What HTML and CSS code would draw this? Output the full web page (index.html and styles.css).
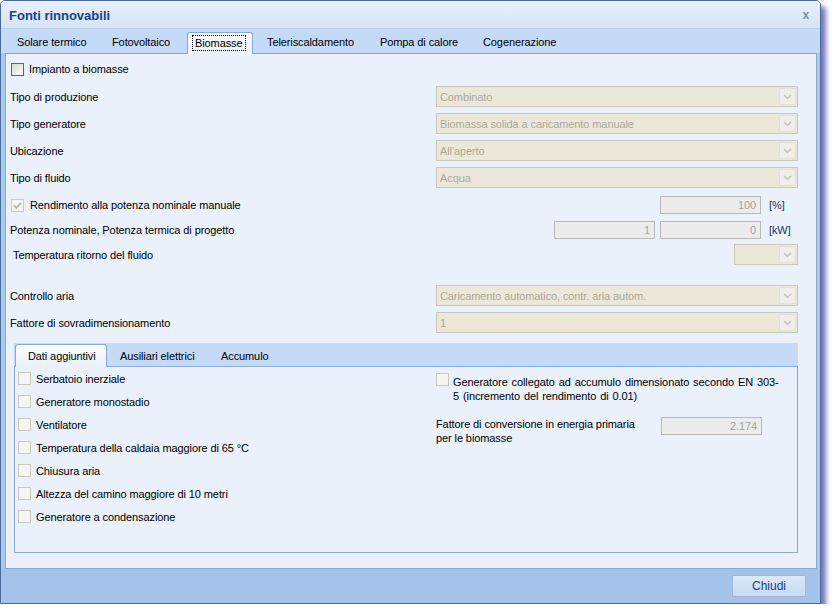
FILE: index.html
```html
<!DOCTYPE html>
<html>
<head>
<meta charset="utf-8">
<link rel="stylesheet" href="styles.css">
</head>
<body>
<div class="window">
  <div class="titlebar">
    <span class="title">Fonti rinnovabili</span>
    <span class="close">x</span>
  </div>
  <div class="tabstrip">
    <div class="tab t1">Solare termico</div>
    <div class="tab t2">Fotovoltaico</div>
    <div class="tab t3 active"><span class="focus">Biomasse</span></div>
    <div class="tab t4">Teleriscaldamento</div>
    <div class="tab t5">Pompa di calore</div>
    <div class="tab t6">Cogenerazione</div>
  </div>
  <div class="panel">
    <div class="row r-main">
      <span class="cb enabled"></span><span class="cbl">Impianto a biomasse</span>
    </div>
    <div class="row r-combo first">
      <span class="lbl">Tipo di produzione</span>
      <div class="combo"><span class="ctext">Combinato</span><span class="arrow"><svg width="9" height="6" viewBox="0 0 9 6"><path d="M1 1 L4.5 4.5 L8 1" fill="none" stroke="#c3c3c3" stroke-width="1.5"/></svg></span></div>
    </div>
    <div class="row r-combo">
      <span class="lbl">Tipo generatore</span>
      <div class="combo"><span class="ctext">Biomassa solida a caricamento manuale</span><span class="arrow"><svg width="9" height="6" viewBox="0 0 9 6"><path d="M1 1 L4.5 4.5 L8 1" fill="none" stroke="#c3c3c3" stroke-width="1.5"/></svg></span></div>
    </div>
    <div class="row r-combo">
      <span class="lbl">Ubicazione</span>
      <div class="combo"><span class="ctext">All'aperto</span><span class="arrow"><svg width="9" height="6" viewBox="0 0 9 6"><path d="M1 1 L4.5 4.5 L8 1" fill="none" stroke="#c3c3c3" stroke-width="1.5"/></svg></span></div>
    </div>
    <div class="row r-combo">
      <span class="lbl">Tipo di fluido</span>
      <div class="combo"><span class="ctext">Acqua</span><span class="arrow"><svg width="9" height="6" viewBox="0 0 9 6"><path d="M1 1 L4.5 4.5 L8 1" fill="none" stroke="#c3c3c3" stroke-width="1.5"/></svg></span></div>
    </div>
    <div class="row r-rend">
      <span class="cb checked"><svg width="9" height="9" viewBox="0 0 9 9"><path d="M1 4.5 L3.3 7 L8 1.8" fill="none" stroke="#b5b5b0" stroke-width="1.8"/></svg></span>
      <span class="cbl grow">Rendimento alla potenza nominale manuale</span>
      <span class="field">100</span>
      <span class="unit">[%]</span>
    </div>
    <div class="row r-pot">
      <span class="grow">Potenza nominale, Potenza termica di progetto</span>
      <span class="field">1</span>
      <span class="field f2">0</span>
      <span class="unit">[kW]</span>
    </div>
    <div class="row r-temp">
      <span class="grow indent">Temperatura ritorno del fluido</span>
      <div class="combo small"><span class="ctext"></span><span class="arrow"><svg width="9" height="6" viewBox="0 0 9 6"><path d="M1 1 L4.5 4.5 L8 1" fill="none" stroke="#c3c3c3" stroke-width="1.5"/></svg></span></div>
    </div>
    <div class="row r-combo r-aria">
      <span class="lbl">Controllo aria</span>
      <div class="combo"><span class="ctext">Caricamento automatico, contr. aria autom.</span><span class="arrow"><svg width="9" height="6" viewBox="0 0 9 6"><path d="M1 1 L4.5 4.5 L8 1" fill="none" stroke="#c3c3c3" stroke-width="1.5"/></svg></span></div>
    </div>
    <div class="row r-combo">
      <span class="lbl">Fattore di sovradimensionamento</span>
      <div class="combo"><span class="ctext">1</span><span class="arrow"><svg width="9" height="6" viewBox="0 0 9 6"><path d="M1 1 L4.5 4.5 L8 1" fill="none" stroke="#c3c3c3" stroke-width="1.5"/></svg></span></div>
    </div>

    <div class="inner">
      <div class="itabs">
        <div class="itab active">Dati aggiuntivi</div>
        <div class="itab i2">Ausiliari elettrici</div>
        <div class="itab i3">Accumulo</div>
      </div>
      <div class="ipanel">
        <div class="icol">
          <div class="irow"><span class="cb"></span><span class="cbl">Serbatoio inerziale</span></div>
          <div class="irow"><span class="cb"></span><span class="cbl">Generatore monostadio</span></div>
          <div class="irow"><span class="cb"></span><span class="cbl">Ventilatore</span></div>
          <div class="irow"><span class="cb"></span><span class="cbl">Temperatura della caldaia maggiore di 65 °C</span></div>
          <div class="irow"><span class="cb"></span><span class="cbl">Chiusura aria</span></div>
          <div class="irow"><span class="cb"></span><span class="cbl">Altezza del camino maggiore di 10 metri</span></div>
          <div class="irow"><span class="cb"></span><span class="cbl">Generatore a condensazione</span></div>
        </div>
        <div class="rcol">
          <div class="rcheck">
            <span class="cb"></span>
            <span class="rtext">Generatore collegato ad accumulo dimensionato secondo EN 303-<br>5 (incremento del rendimento di 0.01)</span>
          </div>
          <div class="conv">
            <span class="convl">Fattore di conversione in energia primaria<br>per le biomasse</span>
            <span class="field">2.174</span>
          </div>
        </div>
      </div>
    </div>
  </div>
  <div class="footer">
    <div class="btn">Chiudi</div>
  </div>
</div>
</body>
</html>
```

FILE: styles.css
```css
* { box-sizing: border-box; }

body {
  margin: 0;
  background: #ffffff;
  font-family: "Liberation Sans", Arial, sans-serif;
  font-size: 11px;
  letter-spacing: -0.1px;
  color: #000;
}

.window {
  width: 821px;
  height: 604px;
  border: 1px solid #4a6a98;
  border-radius: 5px 5px 0 0;
  background: #aac7ee;
  box-shadow: 5px 6px 5px rgba(72, 72, 168, 0.75);
  display: flex;
  flex-direction: column;
  overflow: hidden;
}

.titlebar {
  height: 27px;
  flex: none;
  display: flex;
  align-items: center;
  justify-content: space-between;
  padding: 1px 11px 0 8px;
  background: linear-gradient(#e8f0fb, #d6e4f6);
}

.title {
  font-size: 13px;
  font-weight: bold;
  color: #15428b;
  letter-spacing: 0;
}

.close {
  font-size: 12px;
  font-weight: bold;
  color: #8090a8;
}

.tabstrip {
  height: 25px;
  flex: none;
  display: flex;
  align-items: flex-end;
  padding-left: 4px;
  background: #c4daf7;
  border-top: 1px solid #b9d1f0;
}

.tab {
  height: 21px;
  padding-left: 12px;
  display: flex;
  align-items: center;
  padding-bottom: 1px;
}
.t1 { width: 95px; }
.t2 { width: 83px; }
.t3 { width: 72px; }
.t4 { width: 113px; }
.t5 { width: 103px; }
.t6 { width: 96px; }

.tab.active {
  margin-left: 4px;
  width: 66px;
  padding-left: 4px;
  margin-right: 2px;
  background: linear-gradient(#fbfdff, #eaf1fb);
  border: 1px solid #8ba8d0;
  border-bottom: none;
  border-radius: 3px 3px 0 0;
  margin-bottom: -1px;
  height: 22px;
  position: relative;
}

.focus {
  border: 1px dotted #000;
  padding: 1px 2px;
}

.panel {
  flex: 1;
  margin: 0 3px 0 4px;
  background: #eaf1fb;
  border: 1px solid #8ba8d0;
  padding: 0 18px 0 4px;
  display: flex;
  flex-direction: column;
}

.row {
  display: flex;
  align-items: center;
  flex: none;
}

.r-main { height: 18px; margin-top: 6px; }
.r-combo { height: 21px; margin-top: 6px; }
.r-combo.first { margin-top: 8px; }
.r-rend { height: 18px; margin-top: 8px; }
.r-pot { height: 18px; margin-top: 7px; }
.r-temp { height: 21px; margin-top: 5px; }
.r-aria { margin-top: 20px; }

.lbl { width: 426px; flex: none; }
.grow { flex: 1; }
.indent { padding-left: 3px; }

.cb {
  width: 13px;
  height: 13px;
  flex: none;
  border: 1px solid #cbc9bd;
  background: #f5f5f1;
  display: inline-flex;
  align-items: center;
  justify-content: center;
}
.cb.enabled {
  border-color: #5b6470;
  background: linear-gradient(135deg, #d8d8d2, #ffffff);
}
.r-main .cb, .r-rend .cb { margin-left: 1px; }
.cbl { margin-left: 5px; }
.r-rend .cbl { margin-left: 6px; }

.combo {
  flex: 1;
  height: 21px;
  border: 1px solid #c9c8bf;
  background: #ebe8d9;
  display: flex;
  align-items: center;
  padding: 0 1px 0 3px;
}
.combo.small { flex: none; width: 64px; }
.ctext { flex: 1; color: #aca899; white-space: nowrap; }
.arrow {
  width: 17px;
  height: 17px;
  background: #efeee8;
  border: 1px solid #e2e1da;
  display: flex;
  align-items: center;
  justify-content: center;
}

.field {
  width: 101px;
  height: 18px;
  flex: none;
  border: 1px solid #b9b9b9;
  background: #ececec;
  color: #a3a3a3;
  text-align: right;
  padding: 2px 4px 0 0;
}
.f2 { margin-left: 5px; }
.unit {
  width: 37px;
  flex: none;
  padding-left: 8px;
  color: #1d3557;
}

.inner {
  margin: 10px 0 0 4px;
  flex: none;
}

.itabs {
  height: 23px;
  background: #c4daf7;
  display: flex;
  align-items: flex-end;
}

.itab {
  height: 21px;
  display: flex;
  align-items: center;
  padding-left: 13px;
}
.itab.active {
  width: 92px;
  margin-left: 1px;
  padding-left: 12px;
  height: 23px;
  background: linear-gradient(#fbfdff, #eaf1fb);
  border: 1px solid #8ba8d0;
  border-bottom: none;
  border-radius: 3px 3px 0 0;
  margin-bottom: -1px;
  position: relative;
}
.i2 { width: 101px; }
.i3 { width: 80px; }

.ipanel {
  height: 187px;
  border: 1px solid #8ba8d0;
  background: #eaf1fb;
  display: grid;
  grid-template-columns: 418px 1fr;
  padding-left: 3px;
}

.irow {
  height: 23px;
  display: flex;
  align-items: center;
}

.rcheck {
  display: flex;
  align-items: flex-start;
  margin-top: 6px;
}
.rtext {
  margin-left: 4px;
  line-height: 14px;
  margin-top: 2px;
  word-spacing: 1px;
  white-space: nowrap;
}

.conv {
  display: flex;
  align-items: flex-start;
  margin-top: 14px;
}
.convl {
  width: 225px;
  line-height: 14px;
  flex: none;
  white-space: nowrap;
}

.footer {
  height: 34px;
  flex: none;
  background: #a4c3ea;
  display: flex;
  justify-content: flex-end;
  align-items: flex-start;
  padding: 6px 14px 0 0;
}

.btn {
  width: 74px;
  height: 22px;
  border: 1px solid #9db6d8;
  border-radius: 2px;
  background: linear-gradient(#dce8f7, #c8daf2);
  color: #15428b;
  font-size: 12px;
  letter-spacing: 0;
  display: flex;
  align-items: center;
  justify-content: center;
}
```
